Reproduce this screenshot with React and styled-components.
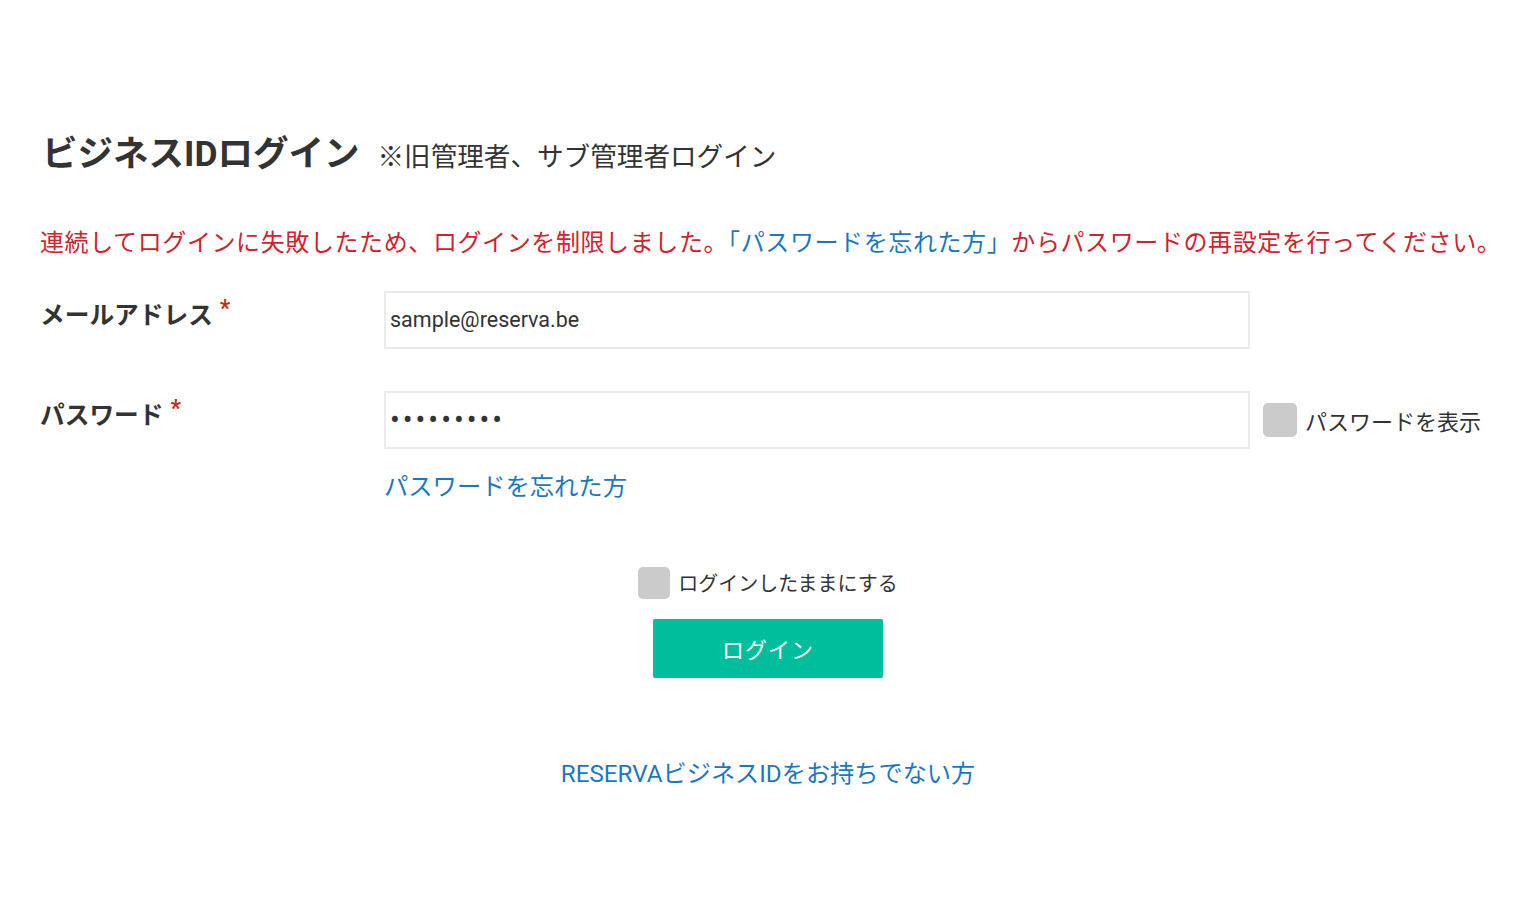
import React, { useState } from 'react';
import styled, { createGlobalStyle } from 'styled-components';

const GlobalStyle = createGlobalStyle`
  html, body {
    margin: 0;
    padding: 0;
    background: #fff;
  }
  body {
    font-family: Roboto, "Noto Sans CJK JP", sans-serif;
    color: #333;
  }
`;

const Page = styled.div`
  width: 1536px;
  min-height: 901px;
  box-sizing: border-box;
  padding: 131px 40px 0 40px;
`;

const TitleRow = styled.div`
  display: flex;
  align-items: baseline;
  gap: 18px;
  padding-left: 2px;
`;

const Title = styled.h1`
  margin: 0;
  font-size: 35.5px;
  font-weight: 700;
  color: #333;
  line-height: 1.3;
`;

const SubTitle = styled.span`
  font-size: 26.6px;
  color: #333;
`;

const ErrorText = styled.p`
  margin: 50px 0 0;
  font-size: 24px;
  letter-spacing: 0.6px;
  line-height: 1.4;
  color: #d0232d;
  white-space: nowrap;
`;

const InlineLink = styled.a`
  color: #1a78c2;
  text-decoration: none;
`;

const FormRow = styled.div`
  display: flex;
  align-items: flex-start;
  margin-top: ${p => p.$top}px;
`;

const Label = styled.label`
  width: 344px;
  flex-shrink: 0;
  font-size: 24.7px;
  font-weight: 700;
  color: #333;
  line-height: 1;
  padding-top: 6px;
`;

const Required = styled.span`
  color: #c0311a;
  font-size: 23px;
  font-weight: 700;
  vertical-align: 8px;
  margin-left: 7px;
`;

const Field = styled.div`
  display: flex;
  flex-direction: column;
`;

const InputLine = styled.div`
  display: flex;
  align-items: center;
  gap: 13px;
`;

const Input = styled.input`
  width: 866px;
  height: 58px;
  box-sizing: border-box;
  border: 2px solid #ebebeb;
  padding: 0 4px;
  font-family: Roboto, sans-serif;
  font-size: ${p => (p.type === 'password' ? '29px' : '21.5px')};
  letter-spacing: ${p => (p.type === 'password' ? '3px' : '0')};
  color: #333;
  outline: none;
  background: #fff;
`;

const Check = styled.span`
  width: ${p => p.$size}px;
  height: ${p => p.$size}px;
  border-radius: 5px;
  background: #cbcbcb;
  flex-shrink: 0;
`;

const CheckLabel = styled.label`
  display: flex;
  align-items: center;
  gap: 8px;
  font-size: ${p => p.$fs}px;
  color: #333;
  cursor: pointer;
`;

const ForgotLink = styled(InlineLink)`
  font-size: 24.3px;
  margin-top: 18px;
`;

const Center = styled.div`
  display: flex;
  flex-direction: column;
  align-items: center;
  margin-top: 65px;
`;

const LoginButton = styled.button`
  width: 230px;
  height: 59px;
  margin-top: 20px;
  border: none;
  border-radius: 2px;
  background: #00bd9b;
  color: #fff;
  font-family: Roboto, "Noto Sans CJK JP", sans-serif;
  font-size: 22px;
  letter-spacing: 1px;
  cursor: pointer;
`;

const BottomLink = styled(InlineLink)`
  margin-top: 76px;
  font-size: 24.2px;
`;

export default function App() {
  const [email, setEmail] = useState('sample@reserva.be');
  const [pw, setPw] = useState('123456789');

  return (
    <>
      <GlobalStyle />
      <Page>
        <TitleRow>
          <Title>ビジネスIDログイン</Title>
          <SubTitle>※旧管理者、サブ管理者ログイン</SubTitle>
        </TitleRow>

        <ErrorText>
          連続してログインに失敗したため、ログインを制限しました。
          <InlineLink href="#">「パスワードを忘れた方」</InlineLink>
          からパスワードの再設定を行ってください。
        </ErrorText>

        <FormRow $top={30}>
          <Label>
            メールアドレス<Required>*</Required>
          </Label>
          <Field>
            <Input type="text" value={email} onChange={e => setEmail(e.target.value)} />
          </Field>
        </FormRow>

        <FormRow $top={42}>
          <Label>
            パスワード<Required>*</Required>
          </Label>
          <Field>
            <InputLine>
              <Input type="password" value={pw} onChange={e => setPw(e.target.value)} />
              <CheckLabel $fs={22}>
                <Check $size={34} />
                パスワードを表示
              </CheckLabel>
            </InputLine>
            <ForgotLink href="#">パスワードを忘れた方</ForgotLink>
          </Field>
        </FormRow>

        <Center>
          <CheckLabel $fs={20}>
            <Check $size={32} />
            ログインしたままにする
          </CheckLabel>
          <LoginButton>ログイン</LoginButton>
          <BottomLink href="#">RESERVAビジネスIDをお持ちでない方</BottomLink>
        </Center>
      </Page>
    </>
  );
}
